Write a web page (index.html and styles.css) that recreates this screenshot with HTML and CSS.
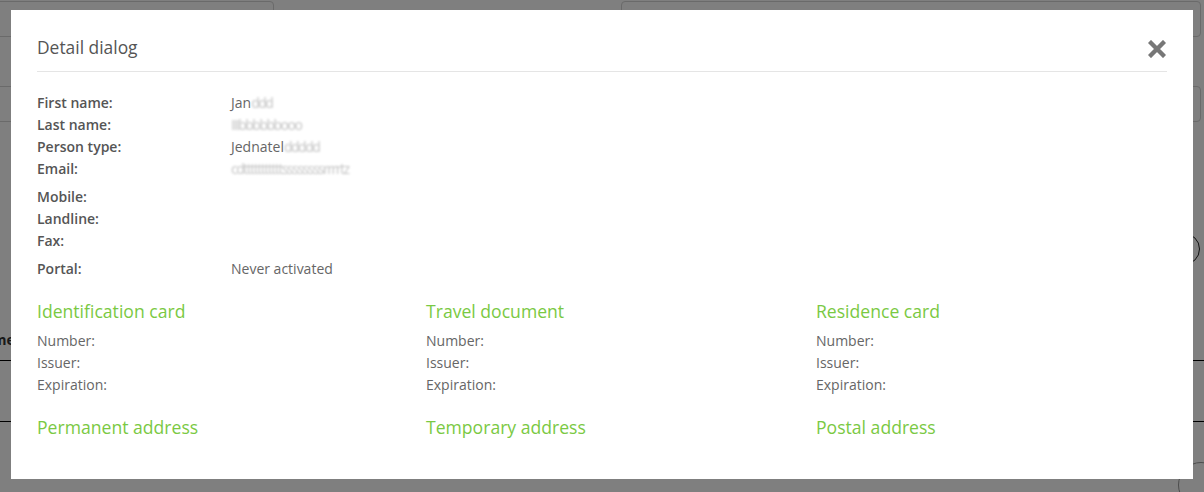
FILE: index.html
```html
<!DOCTYPE html>
<html lang="en">
<head>
<meta charset="UTF-8">
<meta name="viewport" content="width=device-width, initial-scale=1.0">
<title>Detail dialog</title>
<link rel="stylesheet" href="styles.css">
</head>
<body>
  <!-- page behind the dialog -->
  <div class="page">
    <div class="form-row">
      <div class="field field-left"></div>
      <div class="field field-right"></div>
    </div>
    <div class="form-row second">
      <div class="field field-left"></div>
      <div class="field field-right"></div>
    </div>
    <div class="tools">
      <span class="round-btn"></span>
    </div>
    <div class="grid-head"><span>Name</span></div>
    <div class="grid-row"></div>
    <div class="tools bottom">
      <span class="round-btn"></span>
    </div>
  </div>

  <div class="backdrop"></div>

  <div class="modal">
    <div class="modal-header">
      <h3>Detail dialog</h3>
      <button type="button" class="close" aria-label="Close">
        <svg width="18" height="18" viewBox="0 0 18 18">
          <path d="M3 3 L15 15 M15 3 L3 15" stroke="#777" stroke-width="4.4" stroke-linecap="square"/>
        </svg>
      </button>
    </div>

    <div class="modal-body">
      <div class="info-group">
        <div class="info-row"><span class="label">First name:</span><span class="value">Jan<span class="blur">ddd</span></span></div>
        <div class="info-row"><span class="label">Last name:</span><span class="value"><span class="blur">IIIbbbbbbooo</span></span></div>
        <div class="info-row"><span class="label">Person type:</span><span class="value">Jednatel<span class="blur">ddddd</span></span></div>
        <div class="info-row"><span class="label">Email:</span><span class="value"><span class="blur">cdtttttttttttssssssssrrrrtz</span></span></div>
      </div>
      <div class="info-group">
        <div class="info-row"><span class="label">Mobile:</span><span class="value"></span></div>
        <div class="info-row"><span class="label">Landline:</span><span class="value"></span></div>
        <div class="info-row"><span class="label">Fax:</span><span class="value"></span></div>
      </div>
      <div class="info-group">
        <div class="info-row"><span class="label">Portal:</span><span class="value">Never activated</span></div>
      </div>

      <div class="sections">
        <div class="section">
          <h4>Identification card</h4>
          <div class="sub-row">Number:</div>
          <div class="sub-row">Issuer:</div>
          <div class="sub-row">Expiration:</div>
        </div>
        <div class="section">
          <h4>Travel document</h4>
          <div class="sub-row">Number:</div>
          <div class="sub-row">Issuer:</div>
          <div class="sub-row">Expiration:</div>
        </div>
        <div class="section">
          <h4>Residence card</h4>
          <div class="sub-row">Number:</div>
          <div class="sub-row">Issuer:</div>
          <div class="sub-row">Expiration:</div>
        </div>
        <div class="section address">
          <h4>Permanent address</h4>
        </div>
        <div class="section address">
          <h4>Temporary address</h4>
        </div>
        <div class="section address">
          <h4>Postal address</h4>
        </div>
      </div>
    </div>
  </div>
</body>
</html>
```

FILE: styles.css
```css
html, body {
  margin: 0;
  height: 100%;
  overflow: hidden;
}
body {
  font-family: "Open Sans", "Liberation Sans", sans-serif;
  font-size: 14px;
  color: #555;
  background: #fff;
}

/* page behind */
.page {
  padding-top: 1px;
}
.form-row {
  display: flex;
  justify-content: space-between;
  padding-right: 3px;
}
.form-row.second {
  margin-top: 49px;
}
.field {
  height: 34px;
  border: 1px solid #d4d4d4;
  border-radius: 4px;
}
.field-left {
  width: 280px;
  margin-left: -8px;
}
.field-right {
  width: 578px;
}
.tools {
  display: flex;
  justify-content: flex-end;
  margin-top: 111px;
  padding-right: 4px;
}
.round-btn {
  width: 30px;
  height: 30px;
  border: 1px solid #222;
  border-radius: 50%;
}
.grid-head {
  margin-top: 63px;
  height: 32px;
  border-bottom: 1px solid #000;
  font-weight: bold;
  color: #333;
}
.grid-head span {
  display: block;
  margin-left: -27px;
  padding-top: 2px;
}
.grid-row {
  height: 60px;
  border-bottom: 1px solid #000;
}
.tools.bottom {
  margin-top: 40px;
  padding-right: 0;
  margin-right: -20px;
}
.tools.bottom .round-btn {
  width: 44px;
  height: 44px;
  border-color: #999;
}

.backdrop {
  position: fixed;
  left: 0;
  top: 0;
  width: 100%;
  height: 100%;
  background-color: rgba(0, 0, 0, 0.5);
}

/* dialog */
.modal {
  position: fixed;
  left: 11px;
  top: 10px;
  width: 1182px;
  height: 469px;
  box-sizing: border-box;
  padding: 0 26px;
  background-color: #fff;
}
.modal-header {
  display: flex;
  justify-content: space-between;
  align-items: center;
  height: 62px;
  box-sizing: border-box;
  padding-top: 12px;
  border-bottom: 1px solid #e5e5e5;
}
.modal-header h3 {
  margin: 0;
  font-size: 17.4px;
  font-weight: normal;
  color: #555;
}
.close {
  border: none;
  background: none;
  padding: 0;
  margin-top: 4px;
  margin-right: 1px;
  width: 18px;
  height: 18px;
  cursor: pointer;
}
.close svg {
  display: block;
}
.modal-body {
  padding-top: 20px;
}
.info-group + .info-group {
  margin-top: 6px;
}
.info-row {
  display: flex;
  line-height: 22px;
  height: 22px;
}
.label {
  width: 194px;
  font-weight: 600;
  color: #555;
}
.value {
  color: #666;
}
.blur {
  color: #c4c4c4;
  filter: blur(1px);
  letter-spacing: -1.5px;
}

.sections {
  display: grid;
  grid-template-columns: 389px 390px 1fr;
  margin-top: 18px;
}
.section h4 {
  margin: 0;
  font-size: 17.6px;
  font-weight: normal;
  line-height: 26px;
  color: #7ac943;
}
.section h4 + .sub-row {
  margin-top: 6px;
}
.sub-row {
  line-height: 22px;
  color: #666;
}
.section.address {
  margin-top: 18px;
}
```
